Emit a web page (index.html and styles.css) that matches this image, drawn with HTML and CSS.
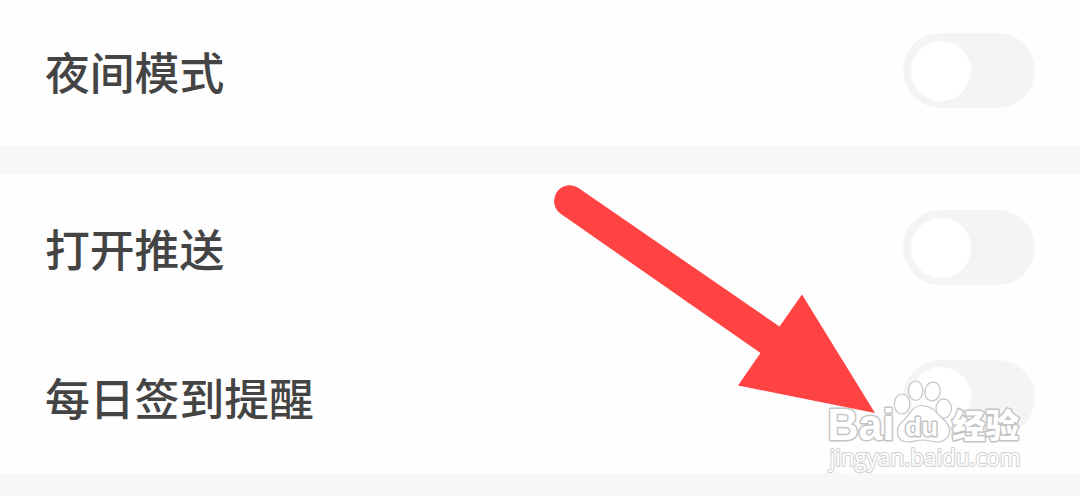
FILE: index.html
```html
<!DOCTYPE html>
<html lang="zh-CN">
<head>
<meta charset="utf-8">
<title>设置</title>
<link rel="stylesheet" href="styles.css">
</head>
<body>
<main class="settings">
  <section class="group group-first">
    <div class="row row-night"><span class="label">夜间模式</span><span class="toggle"><span class="knob"></span></span></div>
  </section>
  <section class="group">
    <div class="row row-push"><span class="label">打开推送</span><span class="toggle"><span class="knob"></span></span></div>
    <div class="row row-remind"><span class="label">每日签到提醒</span><span class="toggle"><span class="knob"></span></span></div>
  </section>
</main>
<svg class="overlay" viewBox="0 0 1080 496">
  <g class="mark">
    <text class="brand" x="827.5" y="440" textLength="67" lengthAdjust="spacingAndGlyphs">Bai</text>
    <ellipse cx="902" cy="404" rx="7.700" ry="10"/>
    <ellipse cx="915.700" cy="390.700" rx="7.200" ry="9.700"/>
    <ellipse cx="932.500" cy="391.500" rx="7.700" ry="9.500" transform="rotate(10 932.5 391.5)"/>
    <ellipse cx="943.700" cy="408.500" rx="7.700" ry="9.700"/>
    <path d="M921.500 405.500C912 405.500 910 415 903 421C894 428 896 442 908 442C915 442 917 440 923 440C929 440 932 442 938 442C950 441 953 429 945 421C937 414 933 405.500 921.500 405.500Z"/>
    <text class="du" x="905" y="436" textLength="33" lengthAdjust="spacingAndGlyphs">du</text>
    <text class="brand-cn" x="952" y="438" textLength="67" lengthAdjust="spacingAndGlyphs">经验</text>
    <text class="site" x="829.500" y="466" textLength="191" lengthAdjust="spacingAndGlyphs">jingyan.baidu.com</text>
  </g>
  <path class="arrow" d="M578.500 188L779.500 326.500L802 294.500L875 413L738 385.500L760.500 353L561 214A15.500 15.500 0 0 1 578.500 188Z"/>
</svg>
</body>
</html>
```
FILE: styles.css
```css
body {
  margin: 0;
  background: #f7f7f7;
  font-family: "Noto Sans CJK SC", sans-serif;
  overflow: hidden;
}
.settings {
  display: flex;
  flex-direction: column;
  gap: 28px;
}
.group { background: #fefefe; }
.group-first { padding-bottom: 5px; }
.row {
  display: flex;
  align-items: center;
  justify-content: space-between;
  box-sizing: border-box;
  padding: 0 45px;
}
.row-night { height: 141px; }
.row-push { height: 147px; }
.row-remind { height: 152px; }
.label {
  font-size: 44.8px;
  line-height: 60px;
  font-weight: 500;
  color: #444;
}
.toggle {
  display: flex;
  align-items: center;
  box-sizing: border-box;
  width: 132px;
  height: 75px;
  padding-left: 8px;
  border-radius: 38px;
  background: #f4f4f4;
}
.knob {
  width: 60px;
  height: 60px;
  border-radius: 50%;
  background: #fff;
}
.overlay {
  position: absolute;
  left: 0;
  top: 0;
  width: 1080px;
  height: 496px;
}
.arrow { fill: #ff4343; }
.mark {
  fill: #fff;
  stroke: #c4c4c4;
  stroke-width: 1.2;
}
.mark text {
  paint-order: stroke;
  stroke-width: 3;
  stroke-linejoin: round;
}
.brand {
  font: bold 43.5px "Liberation Sans", sans-serif;
}
.mark .du {
  font: bold 26px "Liberation Sans", sans-serif;
}
.brand-cn {
  font: 900 33px "Noto Sans CJK SC", sans-serif;
}
.mark .site {
  font: 500 23px "Open Sans", sans-serif;
  stroke-width: 2.2;
  stroke: #d2d2d2;
}
```
